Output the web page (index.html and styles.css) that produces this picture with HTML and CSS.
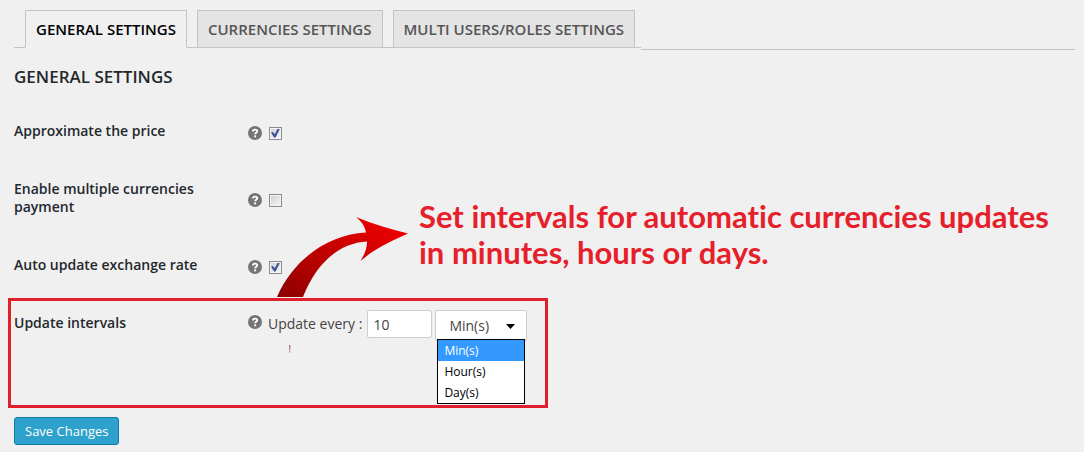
FILE: index.html
```html
<!DOCTYPE html>
<html lang="en">
<head>
  <meta charset="UTF-8">
  <meta name="viewport" content="width=device-width, initial-scale=1.0">
  <title>General Settings</title>
  <link rel="stylesheet" href="styles.css">
</head>
<body>
  <svg class="sprite" aria-hidden="true">
    <symbol id="help" viewBox="0 0 14 14">
      <circle cx="7" cy="7" r="7" fill="#757575"/>
      <path d="M4.9 5.4C4.9 3.2 9.2 3.1 9.2 5.3C9.2 6.8 7.1 6.7 7.1 8.3" fill="none" stroke="#fff" stroke-width="1.8"/>
      <rect x="6.1" y="9.4" width="2" height="1.9" fill="#fff"/>
    </symbol>
  </svg>

  <div class="wrap">
    <nav class="tabs">
      <div class="tab-list">
        <a href="#general" class="tab active">GENERAL SETTINGS</a>
        <a href="#currencies" class="tab">CURRENCIES SETTINGS</a>
        <a href="#roles" class="tab">MULTI USERS/ROLES SETTINGS</a>
      </div>
      <div class="tab-line"></div>
    </nav>

    <h1>GENERAL SETTINGS</h1>

    <form>
      <div class="row">
        <label class="title" for="approximate">Approximate the price</label>
        <div class="field">
          <svg class="help"><use href="#help"/></svg>
          <input type="checkbox" id="approximate" checked>
        </div>
      </div>
      <div class="row">
        <label class="title" for="multiple">Enable multiple currencies payment</label>
        <div class="field">
          <svg class="help"><use href="#help"/></svg>
          <input type="checkbox" id="multiple">
        </div>
      </div>
      <div class="row">
        <label class="title" for="auto-update">Auto update exchange rate</label>
        <div class="field">
          <svg class="help"><use href="#help"/></svg>
          <input type="checkbox" id="auto-update" checked>
        </div>
      </div>

      <div class="row highlight">
        <div class="title">Update intervals</div>
        <div class="interval">
          <svg class="help"><use href="#help"/></svg>
          <label for="every">Update every :</label>
          <input type="text" id="every" value="10">
          <div class="dropdown">
            <select id="unit" aria-label="Interval unit">
              <option>Min(s)</option>
              <option>Hour(s)</option>
              <option>Day(s)</option>
            </select>
            <svg class="caret" viewBox="0 0 9 5"><path d="M0 0H9L4.500 5Z"/></svg>
            <ul class="menu">
              <li class="selected">Min(s)</li>
              <li>Hour(s)</li>
              <li>Day(s)</li>
            </ul>
          </div>
        </div>

        <svg class="arrow" viewBox="270 210 145 150" aria-hidden="true">
          <defs>
            <linearGradient id="red" x1="0" y1="1" x2="1" y2="0">
              <stop offset="0" stop-color="#8c0000"/>
              <stop offset=".5" stop-color="#c50000"/>
              <stop offset="1" stop-color="#f80000"/>
            </linearGradient>
          </defs>
          <path d="M277 297C292 262 325 235 366 232.500C365 226 361 221 356 217C373 224 390 229 408 233.500C391 241 374 249 360.500 261C364 255 367 249 367 241.500C337 243 315 266 303 297Z" fill="url(#red)"/>
          <path d="M289 345H290.500L290 353H289.500Z" fill="#b56a6a"/>
        </svg>
        <p class="note">Set intervals for automatic currencies updates<br>in minutes, hours or days.</p>
      </div>

      <button type="submit" class="save">Save Changes</button>
    </form>
  </div>
</body>
</html>
```
FILE: styles.css
```css
/* styles.css */
* {
  box-sizing: border-box;
}

body {
  margin: 0;
  background: #f0f0f0;
  color: #23282d;
  font-family: "Open Sans", sans-serif;
  font-size: 14px;
}

.sprite {
  position: absolute;
  width: 0;
  height: 0;
}

.wrap {
  padding: 10px 9px 0 14px;
}

/* tabs */
.tabs {
  display: flex;
}

.tab-list {
  display: flex;
  gap: 10px;
  padding: 0 6px 0 11px;
  border-bottom: 1px solid #c4c4c4;
}

.tab {
  padding: 7px 10px 6px;
  margin-bottom: -1px;
  border: 1px solid #c4c4c4;
  background: #e4e4e4;
  color: #555;
  font-size: 15px;
  font-weight: 600;
  line-height: 23px;
  text-decoration: none;
  white-space: nowrap;
}

.tab.active {
  background: #f0f0f0;
  border-bottom-color: #f0f0f0;
  color: #000;
}

.tab-line {
  flex: 1;
  margin-bottom: -2px;
  border-bottom: 1px solid #c4c4c4;
}

h1 {
  margin: 16px 0 13px;
  font-size: 17px;
  font-weight: 600;
  line-height: 25px;
}

/* settings rows */
.row {
  display: grid;
  grid-template-columns: 234px 1fr;
  align-items: center;
  padding: 20px 0;
}

.title {
  padding-right: 40px;
  font-weight: 600;
  line-height: 18px;
}

.field {
  display: flex;
  align-items: center;
  gap: 7px;
  height: 18px;
  padding-top: 4px;
}

.help {
  flex: none;
  width: 14px;
  height: 14px;
}

input[type="checkbox"] {
  appearance: none;
  width: 13px;
  height: 13px;
  margin: 0;
  border: 1px solid #8a8b8b;
  background: linear-gradient(135deg, #cbcfd5, #f6f6f6);
  box-shadow: inset 0 0 0 1px #f4f4f4;
}

input[type="checkbox"]:checked::after {
  content: "";
  display: block;
  width: 9px;
  height: 9px;
  margin: 1px;
  background: #3c4f94;
  clip-path: polygon(0 45%, 20% 38%, 42% 65%, 75% 0, 100% 0, 50% 100%, 35% 100%);
}

.highlight {
  position: relative;
  width: 540px;
  max-width: 100%;
  min-height: 110px;
  margin: 4px 0 9px -6px;
  padding: 9px 3px;
  align-items: start;
  border: 3px solid #df1f2b;
}

.highlight .title {
  padding-top: 4px;
}

.interval {
  display: flex;
  align-items: flex-start;
  color: #444;
}

.interval .help {
  margin: 5px 6px 0 0;
}

.interval label {
  margin-right: 5px;
  line-height: 28px;
  white-space: nowrap;
}

.interval input {
  width: 65px;
  height: 28px;
  margin-right: 3px;
  padding: 0 5px;
  border: 1px solid #ccc;
  border-radius: 2px;
  background: #fff;
  color: #444;
  font: inherit;
}

.dropdown {
  position: relative;
  width: 92px;
}

select {
  appearance: none;
  display: block;
  width: 100%;
  height: 31px;
  padding: 0 13px;
  border: 1px solid #ccc;
  border-radius: 2px;
  background: #fff;
  color: #444;
  font: inherit;
}

.caret {
  position: absolute;
  top: 14px;
  right: 12px;
  width: 9px;
  height: 5px;
}

.menu {
  position: absolute;
  top: 29px;
  left: 2px;
  width: 88px;
  margin: 0;
  padding: 0;
  list-style: none;
  border: 1px solid #000;
  background: #fff;
  color: #000;
  font-size: 12px;
  line-height: 21px;
}

.menu li {
  padding: 0 6px;
}

.menu .selected {
  background: #39f;
  color: #fff;
}

/* callout over the form */
.arrow {
  position: absolute;
  top: -91px;
  left: 259px;
  width: 145px;
  height: 150px;
  pointer-events: none;
}

.note {
  position: absolute;
  top: -103px;
  left: 408px;
  margin: 0;
  color: #e6202b;
  font-family: Lato, sans-serif;
  font-size: 31px;
  font-weight: 700;
  font-variant-ligatures: none;
  line-height: 36px;
  white-space: nowrap;
}

.save {
  display: block;
  height: 28px;
  padding: 0 10px;
  border: 1px solid #0f7ba5;
  border-radius: 3px;
  background: #2ea2cc;
  color: #fff;
  font-family: inherit;
  font-size: 13px;
  cursor: pointer;
}
```
